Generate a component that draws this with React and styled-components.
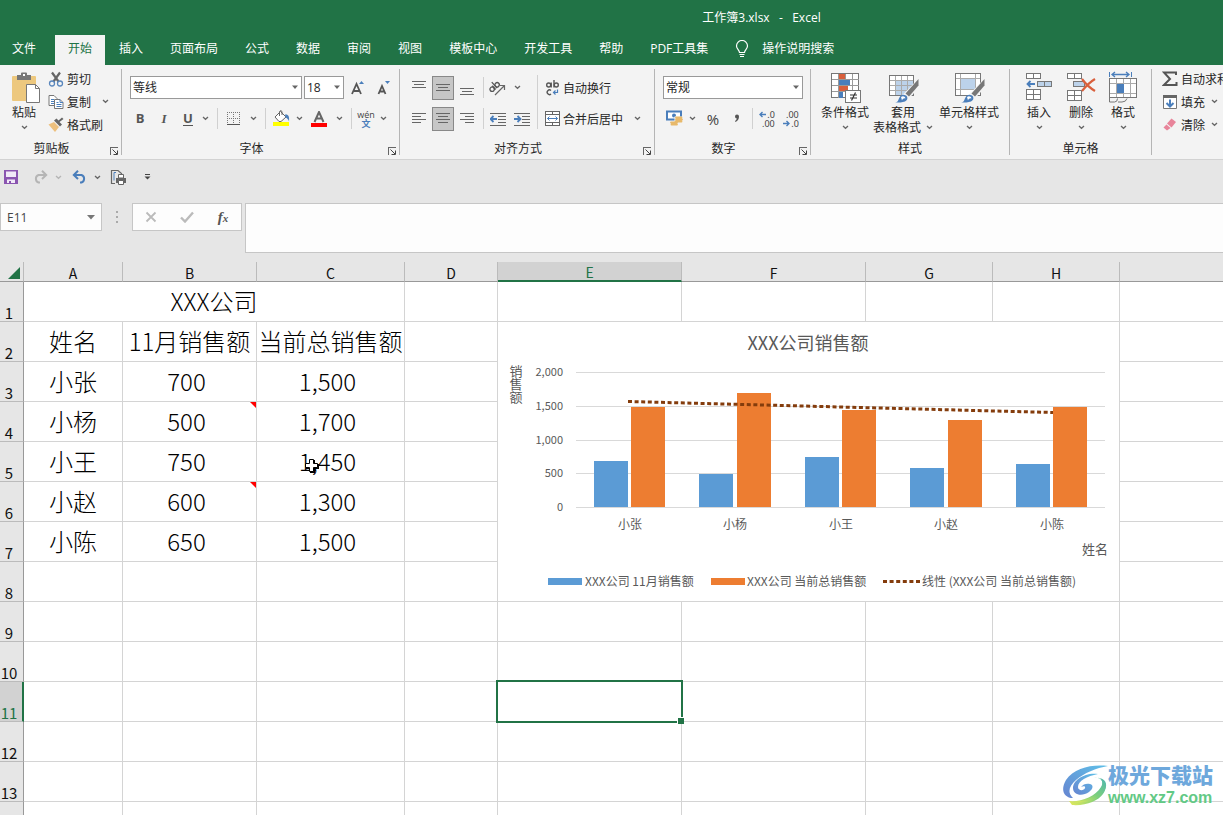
import React from 'react';
import styled, { createGlobalStyle, css } from 'styled-components';

const columns = [
  { name: 'A', width: 99 },
  { name: 'B', width: 134 },
  { name: 'C', width: 148 },
  { name: 'D', width: 93 },
  { name: 'E', width: 184, active: true },
  { name: 'F', width: 184 },
  { name: 'G', width: 127 },
  { name: 'H', width: 127 },
  { name: '' }
];

const people = [
  { name: '小张', month: 700, total: 1500 },
  { name: '小杨', month: 500, total: 1700, note: true },
  { name: '小王', month: 750, total: 1450 },
  { name: '小赵', month: 600, total: 1300, note: true },
  { name: '小陈', month: 650, total: 1500 }
];

const tabs = ['插入', '页面布局', '公式', '数据', '审阅', '视图', '模板中心', '开发工具', '帮助', 'PDF工具集'];

const format = (n) => n.toLocaleString('en-US');

/* ---------- icons ---------- */

const Svg = ({ w = 16, h = w, children, ...rest }) => (
  <svg width={w} height={h} viewBox={`0 0 ${w} ${h}`} fill="none" aria-hidden="true" {...rest}>
    {children}
  </svg>
);

const Chevron = ({ color = '#666' }) => (
  <Svg w={7} h={5}>
    <path d="M1 1l2.5 2.3L6 1" stroke={color} strokeWidth="1.3" />
  </Svg>
);

const Triangle = () => (
  <Svg w={8} h={5}>
    <path d="M1 0.5h6L4 4z" fill="#666" />
  </Svg>
);

const LauncherIcon = () => (
  <Svg w={9}>
    <path d="M1 8.5V1.5H8.5" stroke="#666" shapeRendering="crispEdges" />
    <path d="M3.5 3.5L8 8M8.5 4.5v4h-4" stroke="#444" />
  </Svg>
);

const BulbIcon = () => (
  <Svg w={14} h={18}>
    <path d="M4.5 12.5c0-2.5-3-3.5-3-6.500a5.300 5.300 0 0 1 11 0c0 3-3 4-3 6.500zM4.500 14.500h5M5 16.500h4" stroke="#fff" strokeWidth="1.200" />
  </Svg>
);

const PasteIcon = () => (
  <Svg w={32}>
    <rect x="4" y="5" width="24" height="25" rx="1" fill="#edc87e" />
    <path d="M9 4h4V2.500a1 1 0 0 1 1-1h4a1 1 0 0 1 1 1V4h4v5H9z" fill="#777" />
    <rect x="15" y="3" width="2" height="2" fill="#fff" />
    <path d="M18.500 13.500h9l4 4v14h-13z" fill="#fff" stroke="#777" />
    <path d="M27.500 13.500v4h4" stroke="#777" />
  </Svg>
);

const CutIcon = () => (
  <Svg>
    <path d="M4 1.500l6.500 9M12 1.500L5.500 10.500" stroke="#666" strokeWidth="2.200" />
    <circle cx="4" cy="12.500" r="2.500" stroke="#5a87bd" strokeWidth="1.300" />
    <circle cx="12" cy="12.500" r="2.500" stroke="#5a87bd" strokeWidth="1.300" />
  </Svg>
);

const CopyIcon = () => (
  <Svg>
    <path d="M1 1.500h5l3 3v7H1z" fill="#fff" stroke="#777" />
    <path d="M3 5.500h3M3 7.500h3M3 9.500h3" stroke="#4a7ebb" />
    <path d="M6.500 5.500h5.500l3 3v6H6.500z" fill="#fff" stroke="#777" />
    <path d="M12 5.500v3h3M8.500 8.500h2M8.500 10.500h5M8.500 12.500h5" stroke="#4a7ebb" />
  </Svg>
);

const BrushIcon = () => (
  <Svg>
    <path d="M6 5l5 5-4 5L0.500 7.500z" fill="#edc07e" />
    <path d="M6 3.500l6 6 2-2-2.500-2.500L15.500 2 14 0.500l-3.500 3-2-2z" fill="#666" />
  </Svg>
);

const BordersIcon = () => (
  <Svg w={14} shapeRendering="crispEdges">
    <path d="M0 0.500h13M0 6.500h13M0.500 0v12M6.500 0v12M12.500 0v12" stroke="#777" strokeDasharray="1 1" />
    <path d="M0 12.500h13" stroke="#555" />
  </Svg>
);

const FillIcon = () => (
  <Svg w={17}>
    <path d="M2 7l5.500-5.500L13 7 8 11.500 6 11.500z" fill="#fff" stroke="#666" />
    <path d="M6.500 6V1.500q1.200-2 2.500 0V5" stroke="#666" />
    <path d="M12 4.500c3.500-.5 4.500 2 4 7-.500-2-2-3.500-3.500-4z" fill="#4a7ebb" />
    <rect y="12" width="16" height="4" fill="#ff0" />
  </Svg>
);

const FontColorIcon = () => (
  <Svg w={16}>
    <path d="M3.500 11L8 1l4.500 10M5 7.500h6" stroke="#666" strokeWidth="2" />
    <rect y="12" width="16" height="4" fill="#f00" />
  </Svg>
);

const SizeIcon = ({ small }) => (
  <Svg w={14} h={16}>
    <path d={small ? 'M1.500 14L5 6l3.500 8M3 11.500h4' : 'M1 14L5.500 4l4.500 10M3 11h5'} stroke="#555" strokeWidth="1.800" />
    <path d={small ? 'M8 1h5l-2.500 3z' : 'M8 4h5l-2.500-3z'} fill="#4a7ebb" />
  </Svg>
);

const Lines = ({ rows, h = 14 }) => (
  <Svg w={14} h={h} shapeRendering="crispEdges">
    {rows.map(([x, y, w]) => (
      <path key={y} d={`M${x} ${y + 0.5}h${w}`} stroke="#666" />
    ))}
  </Svg>
);

const OrientationIcon = () => (
  <Svg w={18} h={16}>
    <g transform="rotate(-42 6 8)">
      <circle cx="3" cy="7" r="2.200" stroke="#555" strokeWidth="1.300" />
      <path d="M5.500 4.500v5M7.500 1.500v8" stroke="#555" strokeWidth="1.300" />
      <circle cx="9.700" cy="7" r="2.200" stroke="#555" strokeWidth="1.300" />
    </g>
    <path d="M6 15L15 6M11 5.500h4.500V10" stroke="#666" strokeWidth="1.200" />
  </Svg>
);

const IndentIcon = ({ right }) => (
  <Svg w={16} h={14}>
    <path d="M0 1.500h16M8 4.500h8M8 7.500h8M8 10.500h8M0 13.500h16" stroke="#666" shapeRendering="crispEdges" />
    <path d={right ? 'M0 7h6M3.500 4l3 3-3 3' : 'M7 7H1M3.500 4l-3 3 3 3'} stroke="#4a7ebb" strokeWidth="1.800" />
  </Svg>
);

const WrapIcon = () => (
  <Svg w={15} h={16}>
    <circle cx="3.700" cy="5" r="2" stroke="#555" strokeWidth="1.400" />
    <path d="M6.200 2.500v5M9 0v7.500" stroke="#555" strokeWidth="1.400" />
    <circle cx="11.300" cy="5" r="2" stroke="#555" strokeWidth="1.400" />
    <path d="M6 10.500a2.300 2.300 0 1 0 0 3.500" stroke="#555" strokeWidth="1.400" />
    <path d="M12.500 9.500V12.500H8.500M10.500 10.500l-2 2 2 2" stroke="#4a7ebb" strokeWidth="1.200" />
  </Svg>
);

const MergeIcon = () => (
  <Svg w={15} h={15}>
    <path d="M0.500 0.500h14v14h-14zM0.500 3.500h14M0.500 11.500h14M7.500 0.500v3M7.500 11.500v3" fill="#fff" stroke="#666" shapeRendering="crispEdges" />
    <path d="M2.500 7.500h10M4.500 5.500l-2 2 2 2M10.500 5.500l2 2-2 2" stroke="#4a7ebb" />
  </Svg>
);

const CurrencyIcon = () => (
  <Svg w={17}>
    <path d="M1 1.500h14v8H1z" fill="#fff" stroke="#4a7ebb" strokeWidth="2" />
    <circle cx="8" cy="5.500" r="2" fill="#4a7ebb" />
    <path d="M8.500 6.500h8v5h-3v4h-8v-4h3z" fill="#f3f3f3" />
    <path d="M10 7.500h5.500M10 9.500h6M9.500 11.500h6M5 12.500h6M5.500 14.500h5.500" stroke="#e8b96a" strokeWidth="1.800" strokeLinecap="round" />
  </Svg>
);

const SmallDigit = styled.span`
  display: flex;
  flex-direction: column;
  font-family: "Noto Sans", sans-serif;
  font-size: 9px;
  line-height: 9px;
  color: #444;
`;

const DigitRow = styled.span`
  display: flex;
  align-items: center;
  justify-content: flex-end;
  gap: 1px;
`;

const TinyArrow = ({ right }) => (
  <Svg w={7} h={7}>
    <path d={right ? 'M0 3.500h6M3.500 1l2.500 2.500-2.500 2.500' : 'M7 3.500H1M3.500 1L1 3.500 3.500 6'} stroke="#4a7ebb" strokeWidth="1.400" />
  </Svg>
);

const ConditionalIcon = () => (
  <Svg w={32}>
    <g shapeRendering="crispEdges">
      <path d="M2.500 2.500h27v24h-27z" fill="#fff" stroke="#777" />
      <path d="M2.500 8.500h27M2.500 14.500h27M2.500 20.500h27M9.500 2.500v24M16.500 2.500v24M23.500 2.500v24" stroke="#999" />
      <path d="M10 3h6v5h-6zM10 15h9v5h-9z" fill="#d95f3c" />
      <path d="M10 9h11v5H10zM10 21h4v6h-4z" fill="#4a7ebb" />
      <path d="M16.500 19.500h15v12h-15z" fill="#fff" stroke="#777" />
    </g>
    <path d="M21 24h7M21 27h7M26.500 21.500l-4 8" stroke="#333" strokeWidth="1.200" />
  </Svg>
);

const PaintBrush = () => (
  <g>
    <path d="M31.500 8v6.500L22 25.500l-3.500-3z" fill="#777" />
    <path d="M8 31.500c4 0 3-4.500 6-7 2-1.500 5-.5 6 1 1 2 0 4-2 5-2.500 1-6 1-10 1z" fill="#4a7ebb" />
    <path d="M14 26c2-1.500 4-.5 4.500 1.500-1.500-.5-3 .5-3.500 2z" fill="#fff" />
  </g>
);

const TableStyleIcon = () => (
  <Svg w={32}>
    <g shapeRendering="crispEdges">
      <path d="M2.500 4.500h24v20h-24z" fill="#fff" stroke="#777" />
      <path d="M9 10h17v14H9z" fill="#bcd2ea" />
      <path d="M3 9.500h23M3 14.500h23M3 19.500h23M8.500 5v19M14.500 5v19M20.500 5v19" stroke="#aaa" />
    </g>
    <path d="M32 7L18 21.500l-3 3 7 3 10-11z" fill="#f3f3f3" />
    <PaintBrush />
  </Svg>
);

const CellStyleIcon = () => (
  <Svg w={32}>
    <g shapeRendering="crispEdges">
      <path d="M2.500 2.500h25v22h-25z" fill="#fff" stroke="#777" />
      <path d="M3 7.500h24M3 18.500h24M7.500 3v21M22.500 3v21" stroke="#aaa" />
      <path d="M8 8h14v10H8z" fill="#bcd2ea" />
    </g>
    <path d="M32 7L18 21.500l-3 3 7 3 10-11z" fill="#f3f3f3" />
    <PaintBrush />
  </Svg>
);

const InsertIcon = () => (
  <Svg w={32}>
    <g shapeRendering="crispEdges" stroke="#777">
      <path d="M3.500 2.500h14v5h-14zM10.500 2.500v5M3.500 18.500h14v10h-14zM10.500 18.500v10M3.500 23.500h14" fill="#fff" />
      <path d="M14.500 10.500h14v5h-14zM21.500 10.500v5" fill="#bcd2ea" />
    </g>
    <path d="M12 13H5M7.500 10L4.500 13l3 3" stroke="#4a7ebb" strokeWidth="1.800" />
  </Svg>
);

const DeleteIcon = () => (
  <Svg w={32}>
    <g shapeRendering="crispEdges" stroke="#777">
      <path d="M2.500 2.500h14v5h-14zM9.500 2.500v5M2.500 19.500h14v10h-14zM9.500 19.500v10M2.500 24.500h14" fill="#fff" />
      <path d="M8.500 10.500h11v5h-11z" fill="#bcd2ea" />
    </g>
    <path d="M17 8c3 4 8 9 13 12M30 8c-5 3-9 7-13 12" stroke="#d95f3c" strokeWidth="2.200" />
  </Svg>
);

const FormatIcon = () => (
  <Svg w={32}>
    <g shapeRendering="crispEdges">
      <path d="M2.500 7.500h27v19h-27z" fill="#fff" stroke="#777" />
      <path d="M3 12.500h26M3 22.500h26M9.500 8v18M16.500 8v4M23.500 8v18M16.500 22v4" stroke="#aaa" />
      <path d="M10 13h7v9h-7z" fill="#4a7ebb" />
      <path d="M2.500 1v5M24.500 1v5" stroke="#4a7ebb" />
    </g>
    <path d="M5 3.500h17M8 1L5 3.500 8 6M19 1l3 2.500L19 6" stroke="#4a7ebb" strokeWidth="1.300" />
    <path d="M2.500 27v4h5q3 0 3-3.500M11 31h4q4 0 5-3.500" stroke="#777" />
  </Svg>
);

const SumIcon = () => (
  <Svg>
    <path d="M14 4V1.500H2L8 8l-6 6h12.500v-3" stroke="#555" strokeWidth="2" />
  </Svg>
);

const FillDownIcon = () => (
  <Svg>
    <path d="M1.500 1.500h13v13h-13z" fill="#fff" stroke="#777" />
    <path d="M1 1h14v3H1z" fill="#666" />
    <path d="M8 5.500V12M4.500 9L8 12.500 11.500 9" stroke="#4a7ebb" strokeWidth="2" />
  </Svg>
);

const EraserIcon = () => (
  <Svg>
    <path d="M9.500 1.500L14 5 9.500 10.500 5 6.500z" fill="#e8849a" />
    <path d="M4.500 7.500l4 3.500L5 13.500 1.500 10.500z" fill="#e8849a" />
  </Svg>
);

const SaveIcon = () => (
  <Svg w={14}>
    <path d="M0 0h14v14H0z" fill="#8a55b0" />
    <path d="M2 1.500h10v5.500H2zM3 9.500h8V13H7v-2H5v2H3z" fill="#f1e9f7" />
  </Svg>
);

const UndoIcon = ({ color, flip }) => (
  <Svg w={16} h={14}>
    <g transform={flip ? 'translate(16 0) scale(-1 1)' : undefined}>
      <path d="M2 5h7.500a4 4 0 0 1 0 7.500H8M6 .8L1.800 5 6 9" stroke={color} strokeWidth="2" />
    </g>
  </Svg>
);

const PrintIcon = () => (
  <Svg w={17}>
    <path d="M5 14.500H1.500v-13H8l3.500 3V6" stroke="#666" strokeWidth="1.200" />
    <path d="M6 3.500H4v8" stroke="#4a7ebb" />
    <path d="M8.500 5.500h5V9h-5z" fill="#fff" stroke="#666" />
    <path d="M6 9h10v5H6z" fill="#666" />
    <path d="M8.500 11.500h5v4h-5z" fill="#fff" stroke="#666" />
  </Svg>
);

const MoreIcon = () => (
  <Svg w={7} h={8}>
    <path d="M1 1.500h5" stroke="#444" />
    <path d="M0.500 3.500h6l-3 3z" fill="#444" />
  </Svg>
);

const CursorIcon = () => (
  <Svg w={17}>
    <path d="M6 2h5v4h4v5h-4v4H6v-4H2V6h4z" fill="#000" />
    <path d="M5.500 1.500h4v4h4v4h-4v4h-4v-4h-4v-4h4z" fill="#fff" stroke="#000" />
  </Svg>
);

const LogoIcon = () => (
  <Svg w={46} h={42}>
    <defs>
      <linearGradient id="logoBlue" x1="1" y1="0" x2="0" y2="1">
        <stop offset="0" stopColor="#5fc0e8" />
        <stop offset="1" stopColor="#6684d0" />
      </linearGradient>
      <linearGradient id="logoGreen" x1="1" y1="0" x2="0" y2="1">
        <stop offset="0" stopColor="#4fb6b0" />
        <stop offset="0.5" stopColor="#7ccf7c" />
        <stop offset="1" stopColor="#e6ea5a" />
      </linearGradient>
    </defs>
    <path d="M46 2C30 0 12 4 4 16c-6 10-2 18 7 18C5 29 7 22 14 16 22 9 34 4 46 2z" fill="url(#logoBlue)" />
    <path d="M36 10C23 8 11 16 11 24c0 7 9 9 16 4 4-3 5-7 1-8-3-1-7 0-9 3 2-1 5-1 4 1-1 3-7 3-7-1 0-6 9-11 20-13z" fill="url(#logoBlue)" />
    <path d="M32 13c8 1 10 5 7 10-6 10-20 15-32 14l3 4c14 1 26-4 31-11 6-9 2-16-9-17z" fill="url(#logoGreen)" />
    <path d="M38 14c4 4 3 9-2 14-6 6-14 9-24 10 12 2 24-2 29-9 5-7 4-13-3-15z" fill="url(#logoGreen)" />
  </Svg>
);

/* ---------- chart ---------- */

const SalesChart = () => {
  const bottom = 185;
  const scale = 135 / 2000;
  const step = 105.5;
  const ticks = [0, 500, 1000, 1500, 2000];
  const top = (v) => Math.round(bottom - v * scale);
  return (
    <ChartSvg viewBox="0 0 621 279" role="img" aria-label="XXX公司销售额">
      <text x="310" y="28" fontSize="18" textAnchor="middle">XXX公司销售额</text>
      {['销', '售', '额'].map((c, i) => (
        <text key={c} x="18" y={54 + i * 13} fontSize="13" textAnchor="middle">{c}</text>
      ))}
      {ticks.map((t) => (
        <g key={t}>
          <path d={`M78 ${top(t) + 0.5}H607`} stroke="#d9d9d9" shapeRendering="crispEdges" />
          <text x="65" y={top(t) + 4} fontSize="11" textAnchor="end">{format(t)}</text>
        </g>
      ))}
      {people.map((p, i) => {
        const x = 78 + i * step;
        return (
          <g key={p.name}>
            <rect x={Math.floor(x) + 18} y={top(p.month) + 1} width="34" height={bottom - top(p.month) - 1} fill="#5b9bd5" />
            <rect x={Math.ceil(x) + 55} y={top(p.total) + 1} width="34" height={bottom - top(p.total) - 1} fill="#ed7d31" />
            <text x={Math.floor(x) + 54} y="207" fontSize="12" textAnchor="middle">{p.name}</text>
          </g>
        );
      })}
      <path d="M130 79.500L555 90.500" stroke="#843c0c" strokeWidth="3" strokeDasharray="4 2.600" />
      <text x="610" y="232" fontSize="13" textAnchor="end">姓名</text>
      <rect x="50" y="256" width="34" height="7" fill="#5b9bd5" />
      <text x="87" y="264" fontSize="12">XXX公司 11月销售额</text>
      <rect x="213" y="256" width="34" height="7" fill="#ed7d31" />
      <text x="249" y="264" fontSize="12">XXX公司 当前总销售额</text>
      <path d="M385 259.500h37" stroke="#843c0c" strokeWidth="3" strokeDasharray="4 2.600" />
      <text x="424" y="264" fontSize="12">线性 (XXX公司 当前总销售额)</text>
    </ChartSvg>
  );
};

/* ---------- small parts ---------- */

const Tool = ({ label, width, chevron, on, children }) => (
  <>
    <IconButton aria-label={label} $width={width} $on={on}>{children}</IconButton>
    {chevron && (
      <IconButton aria-label={`${label} 选项`} $width={14}><Chevron /></IconButton>
    )}
  </>
);

const Group = ({ title, width, launcher, children }) => (
  <GroupBox $width={width} aria-label={title}>
    <GroupBody>{children}</GroupBody>
    <GroupFooter>
      <GroupTitle>{title}</GroupTitle>
      {launcher && <Launcher aria-label={`${title}设置`}><LauncherIcon /></Launcher>}
    </GroupFooter>
  </GroupBox>
);

const Combo = ({ label, value, width }) => (
  <ComboBox $width={width}>
    <ComboSelect aria-label={label} defaultValue={value}>
      <option>{value}</option>
    </ComboSelect>
    <ComboArrow><Triangle /></ComboArrow>
  </ComboBox>
);

const Big = ({ icon, label, second, width }) => (
  <BigButton $width={width}>
    {icon}
    <span>{label}</span>
    <BigLine>
      {second}
      <Chevron />
    </BigLine>
  </BigButton>
);

const Small = ({ icon, label, chevron, near }) => (
  <SmallButton>
    {icon}
    {label}
    {chevron && <ChevronSlot $near={near}><Chevron /></ChevronSlot>}
  </SmallButton>
);

const Ribbon = () => (
  <RibbonBar>
    <Group title="剪贴板" width={122} launcher>
      <Big icon={<PasteIcon />} label="粘贴" width={48} />
      <SmallStack>
        <Small icon={<CutIcon />} label="剪切" />
        <Small icon={<CopyIcon />} label="复制" chevron />
        <Small icon={<BrushIcon />} label="格式刷" />
      </SmallStack>
    </Group>
    <Group title="字体" width={278} launcher>
      <Rows>
        <ToolRow $gap={2}>
          <Combo label="字体" value="等线" width={172} />
          <Combo label="字号" value="18" width={40} />
          <Tool label="增大字号" width={24}><SizeIcon /></Tool>
          <Tool label="减小字号" width={24}><SizeIcon small /></Tool>
        </ToolRow>
        <ToolRow>
          <Tool label="加粗" width={20}><Letter>B</Letter></Tool>
          <Tool label="倾斜" width={28}><Letter $italic>I</Letter></Tool>
          <Tool label="下划线" width={20} chevron><Letter $underline>U</Letter></Tool>
          <Divider />
          <Tool label="边框" width={24} chevron><BordersIcon /></Tool>
          <Divider />
          <Tool label="填充颜色" width={22} chevron><FillIcon /></Tool>
          <Tool label="字体颜色" width={26} chevron><FontColorIcon /></Tool>
          <Divider />
          <Tool label="拼音" width={20} chevron>
            <Pinyin>
              <span>wén</span>
              <b>文</b>
            </Pinyin>
          </Tool>
        </ToolRow>
      </Rows>
    </Group>
    <Group title="对齐方式" width={255} launcher>
      <Rows>
        <ToolRow $gap={2}>
          <Tool label="顶端对齐" width={22}><Lines rows={[[0, 0, 14], [2, 3, 10], [0, 6, 14]]} /></Tool>
          <Tool label="垂直居中" width={22} on><Lines rows={[[0, 3, 14], [2, 6, 10], [0, 9, 14]]} /></Tool>
          <Tool label="底端对齐" width={22}><Lines rows={[[0, 7, 14], [2, 10, 10], [0, 13, 14]]} /></Tool>
          <Divider $width={6} />
          <Tool label="方向" width={20} chevron><OrientationIcon /></Tool>
        </ToolRow>
        <ToolRow $gap={2}>
          <Tool label="左对齐" width={22}><Lines rows={[[0, 1, 14], [0, 4, 9], [0, 7, 14], [0, 10, 9]]} /></Tool>
          <Tool label="居中" width={22} on><Lines rows={[[0, 1, 14], [2, 4, 10], [0, 7, 14], [2, 10, 10]]} /></Tool>
          <Tool label="右对齐" width={22}><Lines rows={[[0, 1, 14], [5, 4, 9], [0, 7, 14], [5, 10, 9]]} /></Tool>
          <Divider $width={6} />
          <Tool label="减少缩进" width={20}><IndentIcon /></Tool>
          <Tool label="增加缩进" width={24}><IndentIcon right /></Tool>
        </ToolRow>
      </Rows>
      <Divider $tall $width={6} />
      <Rows $tight>
        <Small icon={<WrapIcon />} label="自动换行" />
        <Small icon={<MergeIcon />} label="合并后居中" chevron />
      </Rows>
    </Group>
    <Group title="数字" width={156} launcher>
      <Rows>
        <ToolRow><Combo label="数字格式" value="常规" width={140} /></ToolRow>
        <ToolRow>
          <Tool label="会计数字格式" width={22} chevron><CurrencyIcon /></Tool>
          <Tool label="百分比样式" width={28}><Sign>%</Sign></Tool>
          <Tool label="千位分隔样式" width={20}>
            <Svg w={6} h={9}><path d="M1 2.500a2 2 0 0 1 4 0q0 3.500-3.500 5.500l-.5-1Q2.500 6 2.800 4.500A2 2 0 0 1 1 2.500z" fill="#555" /></Svg>
          </Tool>
          <Divider />
          <Tool label="增加小数位数" width={20}>
            <SmallDigit><DigitRow><TinyArrow />.0</DigitRow><DigitRow>.00</DigitRow></SmallDigit>
          </Tool>
          <Tool label="减少小数位数" width={28}>
            <SmallDigit><DigitRow>.00</DigitRow><DigitRow><TinyArrow right />.0</DigitRow></SmallDigit>
          </Tool>
        </ToolRow>
      </Rows>
    </Group>
    <Group title="样式" width={199}>
      <BigTools $gap={2}>
        <Big icon={<ConditionalIcon />} label="条件格式" width={52} />
        <Big icon={<TableStyleIcon />} label="套用" second="表格格式" width={60} />
        <Big icon={<CellStyleIcon />} label="单元格样式" width={68} />
      </BigTools>
    </Group>
    <Group title="单元格" width={142}>
      <BigTools>
        <Big icon={<InsertIcon />} label="插入" width={42} />
        <Big icon={<DeleteIcon />} label="删除" width={42} />
        <Big icon={<FormatIcon />} label="格式" width={42} />
      </BigTools>
    </Group>
    <Group title="" width={140}>
      <SmallStack $inset>
        <Small icon={<SumIcon />} label="自动求和" />
        <Small icon={<FillDownIcon />} label="填充" chevron near />
        <Small icon={<EraserIcon />} label="清除" chevron near />
      </SmallStack>
    </Group>
  </RibbonBar>
);

const Sheet = () => {
  const blanks = (n, from, row) =>
    columns.slice(from, from + n).map((c) => (
      <Cell key={c.name}>{row === 11 && c.active && <Selection />}</Cell>
    ));
  return (
    <SheetArea>
      <Grid>
        <colgroup>
          <col style={{ width: 24 }} />
          {columns.map((c) => <col key={c.name} style={{ width: c.width }} />)}
        </colgroup>
        <thead>
          <tr>
            <Corner aria-label="全选"><Svg w={12}><path d="M12 0v12H0z" fill="#217346" /></Svg></Corner>
            {columns.map((c) => <ColumnHead key={c.name} $active={c.active}>{c.name}</ColumnHead>)}
          </tr>
        </thead>
        <tbody>
          <tr>
            <RowHead>1</RowHead>
            <Cell colSpan={3}>XXX公司</Cell>
            {blanks(6, 3)}
          </tr>
          <tr>
            <RowHead>2</RowHead>
            <Cell>姓名</Cell>
            <Cell>11月销售额</Cell>
            <Cell>当前总销售额</Cell>
            {blanks(6, 3)}
          </tr>
          {people.map((p, i) => (
            <tr key={p.name}>
              <RowHead>{i + 3}</RowHead>
              <Cell>{p.name}</Cell>
              <Cell $number>{p.month}{p.note && <NoteMark />}</Cell>
              <Cell $number>{format(p.total)}</Cell>
              {blanks(6, 3)}
            </tr>
          ))}
          {[8, 9, 10, 11, 12, 13].map((n) => (
            <tr key={n}>
              <RowHead $active={n === 11}>{n}</RowHead>
              {blanks(9, 0, n)}
            </tr>
          ))}
          <tr>
            <RowHead />
            {blanks(9, 0)}
          </tr>
        </tbody>
      </Grid>
      <ChartFrame><SalesChart /></ChartFrame>
      <Cursor><CursorIcon /></Cursor>
    </SheetArea>
  );
};

const App = () => (
  <>
    <GlobalStyle />
    <Window>
      <TitleBar>工作簿3.xlsx&nbsp;&nbsp; -&nbsp;&nbsp; Excel</TitleBar>
      <TabBar>
        <FileTab>文件</FileTab>
        <Tab $active>开始</Tab>
        {tabs.map((t) => <Tab key={t}>{t}</Tab>)}
        <TellMe><BulbIcon />操作说明搜索</TellMe>
      </TabBar>
      <Ribbon />
      <QuickBar>
        <Tool label="保存" width={22}><SaveIcon /></Tool>
        <Gap />
        <Tool label="恢复" width={24}><UndoIcon color="#b5b5b5" flip /></Tool>
        <IconButton aria-label="恢复选项" $width={12}><Chevron color="#b5b5b5" /></IconButton>
        <Gap />
        <Tool label="撤消" width={20} chevron><UndoIcon color="#4a7ebb" /></Tool>
        <Gap />
        <Tool label="打印预览" width={16}><PrintIcon /></Tool>
        <Gap $wide />
        <Tool label="自定义" width={12}><MoreIcon /></Tool>
      </QuickBar>
      <FormulaBar>
        <NameBox>
          <NameInput aria-label="名称框" defaultValue="E11" />
          <IconButton aria-label="名称列表" $width={20}>
            <Svg w={8} h={5}><path d="M0 0h8L4 4.500z" fill="#777" /></Svg>
          </IconButton>
        </NameBox>
        <Dots>
          <Svg w={2} h={12} shapeRendering="crispEdges"><path d="M0 0h2v2H0zM0 5h2v2H0zM0 10h2v2H0z" fill="#aaa" /></Svg>
        </Dots>
        <FormulaTools>
          <Tool label="取消" width={36}><Svg w={12}><path d="M1.500 1.500l9 9M10.500 1.500l-9 9" stroke="#bbb" strokeWidth="1.800" /></Svg></Tool>
          <Tool label="输入" width={36}><Svg w={14} h={12}><path d="M1 6.500l4 4L13 1.500" stroke="#bbb" strokeWidth="2.400" /></Svg></Tool>
          <Tool label="插入函数" width={36}><Fx>f<small>x</small></Fx></Tool>
        </FormulaTools>
        <FormulaInput aria-label="编辑栏" />
      </FormulaBar>
      <Sheet />
      <Watermark>
        <LogoIcon />
        <WatermarkText>
          <strong>极光下载站</strong>
          <span>www.xz7.com</span>
        </WatermarkText>
      </Watermark>
    </Window>
  </>
);

export default App;

/* ---------- styles ---------- */

const GlobalStyle = createGlobalStyle`
  * {
    box-sizing: border-box;
  }
  body {
    margin: 0;
    overflow: hidden;
    font-family: "Open Sans", "Noto Sans CJK SC", sans-serif;
    font-size: 12px;
    color: #262626;
  }
  button, input, select, textarea {
    font: inherit;
    color: inherit;
    border: 0;
    padding: 0;
    margin: 0;
    background: none;
    outline: none;
  }
  svg {
    display: block;
    flex: none;
  }
`;

const Window = styled.div`
  position: relative;
  height: 100vh;
  display: flex;
  flex-direction: column;
  overflow: hidden;
  background: #e6e6e6;
`;

const TitleBar = styled.header`
  flex: none;
  height: 35px;
  padding-left: 300px;
  background: #217346;
  color: #fff;
  text-align: center;
  line-height: 35px;
`;

const TabBar = styled.nav`
  flex: none;
  height: 30px;
  display: flex;
  gap: 1px;
  background: #217346;
  color: #fff;
`;

const Tab = styled.button`
  flex: none;
  padding: 0 13px 2px;
  line-height: 28px;
  ${({ $active }) => $active && css`
    background: #f3f3f3;
    color: #217346;
  `}
`;

const FileTab = styled(Tab)`
  padding: 0 18px 2px 12px;
`;

const TellMe = styled(Tab)`
  display: flex;
  align-items: center;
  gap: 13px;
`;

const RibbonBar = styled.div`
  flex: none;
  height: 95px;
  display: flex;
  background: #f3f3f3;
  border-bottom: 1px solid #d2d2d2;
  padding-top: 4px;
  overflow: hidden;
`;

const GroupBox = styled.section`
  flex: 0 0 ${({ $width }) => $width}px;
  height: 86px;
  display: flex;
  flex-direction: column;
  border-right: 1px solid #b5b5b5;
`;

const GroupBody = styled.div`
  height: 69px;
  display: flex;
`;

const GroupFooter = styled.div`
  height: 17px;
  display: flex;
  align-items: center;
`;

const GroupTitle = styled.span`
  flex: 1;
  text-align: center;
  line-height: 17px;
  padding-top: 4px;
`;

const Launcher = styled.button`
  width: 18px;
  display: flex;
  justify-content: center;
  padding-left: 2px;
  align-self: flex-end;
`;

const IconButton = styled.button`
  flex: 0 0 ${({ $width }) => $width}px;
  height: 24px;
  display: flex;
  align-items: center;
  justify-content: center;
  ${({ $on }) => $on && css`
    background: #c6c6c6;
    border: 1px solid #888;
  `}
`;

const Rows = styled.div`
  display: flex;
  flex-direction: column;
  padding-top: 3px;
  padding-left: ${({ $tight }) => ($tight ? 5 : 8)}px;
  & > * {
    height: 31px;
  }
`;

const ToolRow = styled.div`
  display: flex;
  align-items: center;
  gap: ${({ $gap = 0 }) => $gap}px;
`;

const Divider = styled.i`
  flex: none;
  width: ${({ $width = 10 }) => $width}px;
  height: ${({ $tall }) => ($tall ? 54 : 21)}px;
  margin-top: ${({ $tall }) => ($tall ? 6 : 0)}px;
  background: linear-gradient(#d0d0d0, #d0d0d0) center / 1px 100% no-repeat;
`;

const ComboBox = styled.div`
  position: relative;
  flex: 0 0 ${({ $width }) => $width}px;
`;

const ComboSelect = styled.select`
  appearance: none;
  display: block;
  width: 100%;
  height: 23px;
  padding-left: 2px;
  background: #fff;
  border: 1px solid #999;
`;

const ComboArrow = styled.span`
  position: absolute;
  right: 3px;
  top: 9px;
  pointer-events: none;
`;

const Letter = styled.span`
  font-size: 13px;
  font-weight: 700;
  color: #555;
  font-style: ${({ $italic }) => ($italic ? 'italic' : 'normal')};
  font-family: ${({ $italic }) => ($italic ? '"Liberation Serif", serif' : 'inherit')};
  border-bottom: ${({ $underline }) => ($underline ? '1px solid #555' : '0')};
  line-height: 13px;
`;

const Pinyin = styled.span`
  display: flex;
  flex-direction: column;
  align-items: center;
  font-size: 9px;
  line-height: 9px;
  color: #444;
  b {
    color: #4a7ebb;
  }
`;

const Sign = styled.span`
  font-size: 15px;
  line-height: 18px;
  color: #444;
`;

const BigButton = styled.button`
  flex: 0 0 ${({ $width }) => $width}px;
  display: flex;
  flex-direction: column;
  align-items: center;
  padding-top: 2px;
  line-height: 15px;
  white-space: nowrap;
  svg + span {
    padding-top: 2px;
  }
`;

const BigLine = styled.span`
  display: flex;
  align-items: center;
  gap: 5px;
  min-height: 15px;
`;

const BigTools = styled.div`
  display: flex;
  gap: ${({ $gap = 0 }) => $gap}px;
  padding-left: 8px;
`;

const SmallStack = styled.div`
  display: flex;
  flex-direction: column;
  margin-top: -2px;
  padding-left: ${({ $inset }) => ($inset ? 10 : 0)}px;
  & > * {
    height: 23px;
  }
`;

const SmallButton = styled.button`
  display: flex;
  align-items: center;
  gap: 3px;
  white-space: nowrap;
`;

const ChevronSlot = styled.span`
  padding-left: ${({ $near }) => ($near ? 3 : 8)}px;
`;

const QuickBar = styled.div`
  flex: none;
  height: 34px;
  display: flex;
  align-items: center;
`;

const Gap = styled.span`
  width: ${({ $wide }) => ($wide ? 14 : 6)}px;
`;

const FormulaBar = styled.div`
  flex: none;
  display: flex;
  align-items: flex-start;
  padding: 9px 0;
`;

const NameBox = styled.div`
  width: 102px;
  height: 28px;
  display: flex;
  align-items: center;
  background: #fdfdfd;
  border: 1px solid #c6c6c6;
`;

const NameInput = styled.input`
  flex: 1;
  min-width: 0;
  padding-left: 6px;
  color: #444;
`;

const Dots = styled.span`
  width: 30px;
  height: 28px;
  display: flex;
  align-items: center;
  justify-content: center;
`;

const FormulaTools = styled.div`
  display: flex;
  align-items: center;
  width: 110px;
  height: 28px;
  background: #fdfdfd;
  border: 1px solid #c6c6c6;
`;

const Fx = styled.i`
  font: italic bold 15px "Liberation Serif", serif;
  color: #555;
  small {
    font-size: 11px;
  }
`;

const FormulaInput = styled.textarea`
  flex: 1;
  height: 50px;
  margin-left: 3px;
  resize: none;
  background: #fdfdfd;
  border: 1px solid #c6c6c6;
  border-right: 0;
`;

const SheetArea = styled.main`
  position: relative;
  flex: 1;
  min-height: 0;
  overflow: hidden;
  font-family: "Noto Sans CJK SC", sans-serif;
`;

const Grid = styled.table`
  width: 100%;
  table-layout: fixed;
  border-collapse: separate;
  border-spacing: 0;
`;

const headCell = css`
  padding: 0;
  background: #e6e6e6;
  font-weight: 400;
  color: #111;
`;

const Corner = styled.th`
  ${headCell}
  height: 20px;
  border-right: 1px solid #bbb;
  border-bottom: 1px solid #999;
  svg {
    margin: 3px 3px 0 auto;
  }
`;

const ColumnHead = styled.th`
  ${headCell}
  height: 20px;
  padding-top: 3px;
  font-size: 14px;
  line-height: 16px;
  border-right: 1px solid #bbb;
  border-bottom: 1px solid #999;
  ${({ $active }) => $active && css`
    background: #d2d2d2;
    color: #217346;
    border-bottom: 2px solid #217346;
    line-height: 15px;
  `}
  &:last-child {
    border-right: 0;
  }
`;

const RowHead = styled.th`
  ${headCell}
  height: 40px;
  padding-right: 5px;
  vertical-align: bottom;
  font-size: 15px;
  line-height: 17px;
  border-right: 1px solid #999;
  border-bottom: 1px solid #bbb;
  ${({ $active }) => $active && css`
    background: #d2d2d2;
    color: #217346;
    padding-right: 4px;
    border-right: 2px solid #217346;
  `}
`;

const Cell = styled.td`
  position: relative;
  height: 40px;
  padding: 0 ${({ $number }) => ($number ? 6 : 0)}px 2px 0;
  background: #fff;
  border-right: 1px solid #d4d4d4;
  border-bottom: 1px solid #d4d4d4;
  color: #000;
  font-size: 24px;
  font-weight: 300;
  line-height: 36px;
  text-align: center;
  white-space: nowrap;
  &:last-child {
    border-right: 0;
  }
`;

const NoteMark = styled.i`
  position: absolute;
  top: 0;
  right: 0;
  border-top: 6px solid #f00;
  border-left: 6px solid transparent;
`;

const Selection = styled.div`
  position: absolute;
  inset: -2px;
  z-index: 1;
  border: 2px solid #217346;
  &::after {
    content: '';
    position: absolute;
    right: -3px;
    bottom: -3px;
    width: 6px;
    height: 6px;
    background: #217346;
    border: 1px solid #fff;
    border-width: 1px 0 0 1px;
  }
`;

const ChartFrame = styled.figure`
  position: absolute;
  left: 498px;
  top: 60px;
  width: 621px;
  margin: 0;
  background: #fff;
`;

const ChartSvg = styled.svg`
  width: 100%;
  fill: #595959;
  font-family: "Noto Sans CJK SC", sans-serif;
`;

const Cursor = styled.span`
  position: absolute;
  left: 304px;
  top: 196px;
`;

const Watermark = styled.div`
  position: absolute;
  right: 10px;
  bottom: 8px;
  display: flex;
  align-items: center;
`;

const WatermarkText = styled.div`
  display: flex;
  flex-direction: column;
  color: #62c985;
  font-family: "Liberation Sans", "Noto Sans CJK SC", sans-serif;
  font-size: 16px;
  font-weight: 700;
  line-height: 18px;
  strong {
    color: #6ea8dc;
    font-size: 21px;
    line-height: 26px;
  }
`;
